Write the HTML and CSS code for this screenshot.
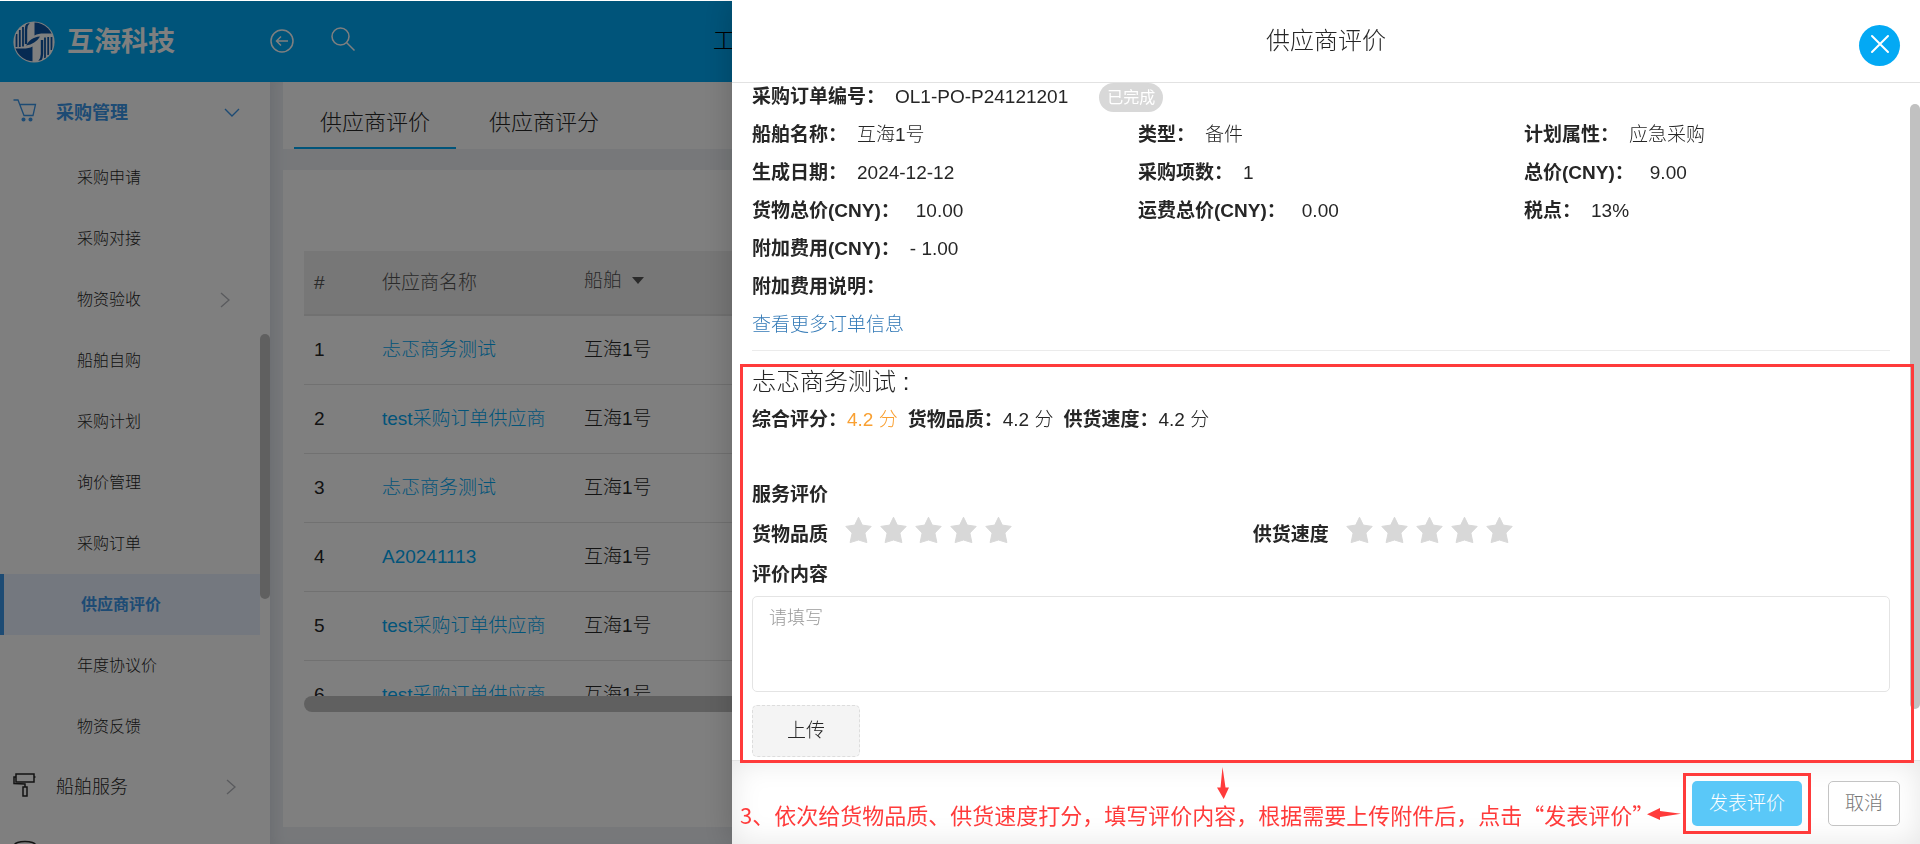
FILE: index.html
```html
<!DOCTYPE html>
<html lang="zh-CN">
<head>
<meta charset="utf-8">
<title>供应商评价</title>
<link rel="stylesheet" href="styles.css">
</head>
<body>
<svg class="sprite" aria-hidden="true">
  <symbol id="star" viewBox="0 0 27 28"><path d="M13.5 1.2 17.3 9.1 26.2 10.4 19.9 17 21.9 26.6 13.5 24 5.1 26.6 7.1 17 .8 10.4 9.7 9.1Z" stroke-linejoin="round" stroke-width="1"/></symbol>
  <symbol id="chev" viewBox="0 0 10 16"><path d="M1 1l8 7-8 7" fill="none" stroke="currentColor" stroke-width="1.4"/></symbol>
</svg>

<div class="app">
  <header class="topbar">
    <a class="brand" href="#">
      <svg class="brand-logo" viewBox="0 0 42 42" aria-hidden="true">
        <clipPath id="disc"><circle cx="21" cy="21" r="19.6"/></clipPath>
        <circle cx="21" cy="21" r="20.6" fill="#fff"/>
        <g clip-path="url(#disc)">
          <path d="M21.500 0H42v12.500H31c-4 0-7 .5-9.500 2z" fill="#0c55a5"/>
          <path d="M19.500 42H0V27.500h10c4 0 7-.5 9.500-2z" fill="#0c55a5"/>
          <path d="M13 24.500c3-5 7-8.500 14-9-3 5-8 8-14 9z" fill="#0c55a5"/>
          <path d="M3.500 13v13M6.800 9v17M10 6v19.500M32 16.500V37M35.200 16v18M38.500 16v13" stroke="#0c55a5" stroke-width="1.800" fill="none"/>
          <path d="M13 23V9c0-4 1-6 3-8M29 19v14c0 4-1 6-3 8" stroke="#0c55a5" stroke-width="2.400" fill="none"/>
        </g>
      </svg>
      <span class="brand-name">互海科技</span>
    </a>
    <button class="icon-btn" type="button" aria-label="返回">
      <svg width="24" height="24" viewBox="0 0 24 24" fill="none" stroke="#fff" stroke-width="1.5"><circle cx="12" cy="12" r="11"/><path d="M18 12H7M11 7.500L6.500 12l4.500 4.500"/></svg>
    </button>
    <button class="icon-btn icon-btn-search" type="button" aria-label="搜索">
      <svg width="24" height="24" viewBox="0 0 24 24" fill="none" stroke="#fff" stroke-width="1.500"><circle cx="9.500" cy="9.500" r="8.500"/><path d="M15.500 15.500l8 8"/></svg>
    </button>
    <span class="topbar-menu">工</span>
  </header>

  <div class="workspace">
    <nav class="sidebar">
      <a class="group group-open" href="#">
        <svg class="group-icon" viewBox="0 0 24 24" fill="none" stroke="currentColor" stroke-width="1.3"><path d="M.5 1H5l6 15.500h9L22.500 5.500H7"/><circle cx="10.500" cy="20.500" r="1.400" fill="currentColor"/><circle cx="17.500" cy="20.500" r="1.400" fill="currentColor"/></svg>
        <span class="group-text">采购管理</span>
        <svg class="group-down" viewBox="0 0 16 10" fill="none" stroke="currentColor" stroke-width="1.400"><path d="M1 1l7 7 7-7"/></svg>
      </a>
      <ul class="submenu">
        <li><a class="item" href="#">采购申请</a></li>
        <li><a class="item" href="#">采购对接</a></li>
        <li><a class="item" href="#">物资验收<svg class="chev"><use href="#chev"/></svg></a></li>
        <li><a class="item" href="#">船舶自购</a></li>
        <li><a class="item" href="#">采购计划</a></li>
        <li><a class="item" href="#">询价管理</a></li>
        <li><a class="item" href="#">采购订单</a></li>
        <li><a class="item item-active" href="#">供应商评价</a></li>
        <li><a class="item" href="#">年度协议价</a></li>
        <li><a class="item" href="#">物资反馈</a></li>
      </ul>
      <a class="group group-closed" href="#">
        <svg class="group-icon" viewBox="0 0 24 24" fill="none" stroke="currentColor" stroke-width="1.500"><path d="M3 1h18v8H3zM21 4h1.500M3 4H1v6.500l11 .5v3M10 14h4v9h-4z"/></svg>
        <span class="group-text">船舶服务</span>
        <svg class="chev"><use href="#chev"/></svg>
      </a>
      <a class="group group-next" href="#" aria-label="更多">
        <svg class="group-icon" viewBox="0 0 24 24" fill="none" stroke="currentColor" stroke-width="1.500"><ellipse cx="12" cy="5" rx="10.500" ry="3.500"/><path d="M1.500 5v16M22.500 5v16"/></svg>
      </a>
      <span class="side-thumb"></span>
    </nav>

    <main class="main">
      <div class="tabs">
        <a class="tab tab-active" href="#">供应商评价</a>
        <a class="tab" href="#">供应商评分</a>
      </div>
      <section class="panel">
        <div class="table-clip">
          <table class="grid">
            <thead>
              <tr><th class="c-no">#</th><th class="c-name">供应商名称</th><th class="c-ship"><span class="sort">船舶<i class="caret"></i></span></th></tr>
            </thead>
            <tbody>
              <tr><td>1</td><td><a href="#">忐忑商务测试</a></td><td>互海1号</td></tr>
              <tr><td>2</td><td><a href="#">test采购订单供应商</a></td><td>互海1号</td></tr>
              <tr><td>3</td><td><a href="#">忐忑商务测试</a></td><td>互海1号</td></tr>
              <tr><td>4</td><td><a href="#">A20241113</a></td><td>互海1号</td></tr>
              <tr><td>5</td><td><a href="#">test采购订单供应商</a></td><td>互海1号</td></tr>
              <tr><td>6</td><td><a href="#">test采购订单供应商</a></td><td>互海1号</td></tr>
            </tbody>
          </table>
        </div>
        <div class="table-thumb"></div>
      </section>
    </main>
  </div>
</div>

<div class="backdrop"></div>

<aside class="drawer" role="dialog" aria-labelledby="drawer-title">
  <header class="drawer-head">
    <h1 class="drawer-title" id="drawer-title">供应商评价</h1>
    <button class="close" type="button" aria-label="关闭">
      <svg width="20" height="20" viewBox="0 0 20 20" stroke="#fff" stroke-width="2" stroke-linecap="round"><path d="M2 2l16 16M18 2L2 18"/></svg>
    </button>
  </header>

  <div class="drawer-body">
    <div class="order-line">
      <b>采购订单编号：</b><span class="value">OL1-PO-P24121201</span><span class="badge">已完成</span>
    </div>
    <div class="facts">
      <div><b>船舶名称：</b><span class="value">互海1号</span></div>
      <div><b>类型：</b><span class="value">备件</span></div>
      <div><b>计划属性：</b><span class="value">应急采购</span></div>
      <div><b>生成日期：</b><span class="value">2024-12-12</span></div>
      <div><b>采购项数：</b><span class="value">1</span></div>
      <div><b>总价(CNY)：</b><span class="value value-sum">9.00</span></div>
      <div><b>货物总价(CNY)：</b><span class="value value-sum">10.00</span></div>
      <div><b>运费总价(CNY)：</b><span class="value value-sum">0.00</span></div>
      <div><b>税点：</b><span class="value">13%</span></div>
      <div class="wide"><b>附加费用(CNY)：</b><span class="value">- 1.00</span></div>
      <div class="wide"><b>附加费用说明：</b></div>
      <div class="wide"><a class="more" href="#">查看更多订单信息</a></div>
    </div>

    <form class="review" id="review">
      <h2 class="supplier">忐忑商务测试 :</h2>
      <p class="scores">
        <span><b>综合评分：</b><span class="score-main">4.2 分</span></span>
        <span><b>货物品质：</b>4.2 分</span>
        <span><b>供货速度：</b>4.2 分</span>
      </p>
      <h3 class="label">服务评价</h3>
      <div class="ratings">
        <div class="rating" role="radiogroup" aria-labelledby="r-quality">
          <b id="r-quality">货物品质</b>
          <span class="stars">
            <label><input type="radio" name="quality" value="1" aria-label="1 星"><svg><use href="#star"/></svg></label>
            <label><input type="radio" name="quality" value="2" aria-label="2 星"><svg><use href="#star"/></svg></label>
            <label><input type="radio" name="quality" value="3" aria-label="3 星"><svg><use href="#star"/></svg></label>
            <label><input type="radio" name="quality" value="4" aria-label="4 星"><svg><use href="#star"/></svg></label>
            <label><input type="radio" name="quality" value="5" aria-label="5 星"><svg><use href="#star"/></svg></label>
          </span>
        </div>
        <div class="rating" role="radiogroup" aria-labelledby="r-speed">
          <b id="r-speed">供货速度</b>
          <span class="stars">
            <label><input type="radio" name="speed" value="1" aria-label="1 星"><svg><use href="#star"/></svg></label>
            <label><input type="radio" name="speed" value="2" aria-label="2 星"><svg><use href="#star"/></svg></label>
            <label><input type="radio" name="speed" value="3" aria-label="3 星"><svg><use href="#star"/></svg></label>
            <label><input type="radio" name="speed" value="4" aria-label="4 星"><svg><use href="#star"/></svg></label>
            <label><input type="radio" name="speed" value="5" aria-label="5 星"><svg><use href="#star"/></svg></label>
          </span>
        </div>
      </div>
      <label class="label" for="comment">评价内容</label>
      <textarea class="comment" id="comment" placeholder="请填写"></textarea>
      <button class="upload" type="button">上传</button>
    </form>
    <span class="drawer-thumb"></span>
  </div>

  <footer class="drawer-foot">
    <span class="submit-wrap"><button class="btn btn-primary" type="submit" form="review">发表评价</button><span class="submit-mark"></span></span>
    <button class="btn btn-plain" type="button">取消</button>
  </footer>

  <div class="form-mark"></div>
  <svg class="arrow-down" viewBox="0 0 14 32" aria-hidden="true"><path d="M6.500 0L9.500 20.500H13L7.700 32 1 20.500H4.500Z" fill="#ff3b3b"/></svg>
  <p class="note">3、依次给货物品质、供货速度打分，填写评价内容，根据需要上传附件后，点击“发表评价”</p>
  <svg class="arrow-left" viewBox="0 0 34 14" aria-hidden="true"><path d="M34 6.800L13 10V13L0 7.300 13 1V4Z" fill="#ff3b3b"/></svg>
</aside>
</body>
</html>
```

FILE: styles.css
```css
* { box-sizing: border-box; }

html, body { height: 100%; }

body {
  margin: 0;
  overflow: hidden;
  background: #fff;
  color: #262626;
  font-family: "Liberation Sans", "Noto Sans CJK SC", sans-serif;
  font-size: 19px;
  font-weight: 300;
  line-height: 26px;
}

a { color: inherit; text-decoration: none; }
button { font: inherit; cursor: pointer; padding: 0; }
b { font-weight: 700; }
.sprite { display: none; }

/* App shell */
.app {
  height: 100vh;
  padding-top: 1px;
  display: flex;
  flex-direction: column;
}

.topbar {
  flex: none;
  height: 81px;
  display: flex;
  align-items: center;
  background: #00a8f4;
}

.brand {
  width: 270px;
  padding-left: 13px;
  display: flex;
  align-items: center;
  gap: 12px;
  color: #fff;
}
.brand-logo { width: 42px; height: 42px; }
.brand-name { font-size: 27px; font-weight: 700; line-height: 36px; }

.icon-btn {
  width: 24px;
  height: 24px;
  margin-bottom: 2px;
  border: 0;
  background: none;
}
.icon-btn svg { display: block; }
.icon-btn-search { margin: 0 0 6px 37px; }
.topbar-menu { margin: 0 0 2px 358px; color: #000; font-size: 22px; }

.workspace { flex: 1; min-height: 0; display: flex; }

/* Sidebar */
.sidebar {
  position: relative;
  flex: none;
  width: 270px;
  padding-right: 10px;
  overflow: hidden;
  background: #fff;
}

.group {
  display: flex;
  align-items: center;
  padding: 0 24px 0 13px;
  font-size: 18px;
}
.group-icon { width: 24px; height: 24px; margin-bottom: 4px; }
.group-text { flex: 1; margin-left: 19px; }
.group-open { height: 65px; padding-right: 20px; padding-bottom: 4px; color: #3a96e8; }
.group-open .group-text { font-weight: 700; }
.group-down { width: 16px; height: 10px; }
.group-closed { height: 60px; }
.group-next { height: 74px; }
.chev { width: 10px; height: 16px; color: #b4b6bc; }

.submenu { margin: 0; padding: 0; list-style: none; }
.item {
  display: flex;
  align-items: center;
  justify-content: space-between;
  height: 61px;
  padding: 0 30px 0 77px;
  font-size: 16px;
}
.item-active {
  border-left: 4px solid #3a96e8;
  background: #e8f1ff;
  color: #3a96e8;
  font-weight: 700;
}

.side-thumb {
  position: absolute;
  top: 252px;
  right: 0;
  width: 10px;
  height: 265px;
  border-radius: 5px;
  background: #c1c1c1;
}

/* Main area */
.main {
  flex: 1;
  min-width: 0;
  display: flex;
  flex-direction: column;
  gap: 21px;
  padding: 0 0 17px 13px;
  background: #eef1f5;
  box-shadow: inset 12px 0 12px -6px rgba(120, 130, 150, .16);
}

.tabs {
  display: flex;
  gap: 7px;
  height: 67px;
  padding-left: 11px;
  background: #fff;
}
.tab {
  padding: 28px 26px 0;
  border-bottom: 2px solid transparent;
  font-size: 22px;
}
.tab-active { border-bottom-color: #00a8f4; }

.panel { flex: 1; min-height: 0; padding: 81px 0 0 21px; background: #fff; }
.table-clip { height: 445px; overflow: hidden; }
.table-thumb { height: 16px; border-radius: 8px; background: #c1c1c1; }

.grid { width: 100%; border-collapse: separate; border-spacing: 0; table-layout: fixed; }
.grid th, .grid td { padding: 0 10px; text-align: left; font-weight: 300; }
.grid th {
  height: 65px;
  background: #eee;
  border-bottom: 2px solid #e2e2e2;
  color: #555;
}
.grid td { height: 69px; border-bottom: 1px solid #e2e2e2; }
.grid td a { color: #03a9f4; }
.c-no { width: 68px; }
.c-name { width: 202px; }
.sort { display: inline-flex; align-items: center; gap: 10px; padding-bottom: 4px; }
.caret {
  border: 6px solid transparent;
  border-top: 7px solid #555;
  border-bottom: 0;
}

.backdrop { position: fixed; inset: 1px 0 0; z-index: 5; background: rgba(0, 0, 0, .5); }

/* Drawer */
.drawer {
  position: fixed;
  inset: 0 0 0 auto;
  z-index: 10;
  width: 61.875%;
  display: flex;
  flex-direction: column;
  background: #fff;
  box-shadow: 0 0 30px rgba(0, 0, 0, .2);
}

.drawer-head {
  position: relative;
  flex: none;
  height: 83px;
  display: flex;
  align-items: center;
  justify-content: center;
  border-bottom: 1px solid #e2e2e2;
}
.drawer-title { margin: 0; font-size: 24px; font-weight: 300; line-height: 36px; }
.close {
  position: absolute;
  top: 25px;
  right: 20px;
  width: 41px;
  height: 41px;
  border: 0;
  border-radius: 50%;
  background: #03a9f4;
}
.close svg { display: block; margin: 0 auto 3px; }

.drawer-body {
  position: relative;
  flex: 1;
  min-height: 0;
  overflow: hidden;
  padding: 0 30px 0 20px;
}

.order-line { display: flex; height: 29px; margin-bottom: 10px; line-height: 28px; }
.value { margin-left: 10px; }
.value-sum { margin-left: 16px; }
.badge {
  margin-left: 31px;
  padding: 0 8px;
  border-radius: 15px;
  background: #d8d8d8;
  color: #fff;
  font-size: 16px;
  font-weight: 400;
  line-height: 29px;
}

.facts {
  display: grid;
  grid-template-columns: repeat(3, 1fr);
  row-gap: 12px;
  margin-right: -20px;
}
.wide { grid-column: 1 / -1; }
.more { color: #337ab7; }

.review {
  margin-top: 12px;
  padding-top: 13px;
  border-top: 1px solid #ebebeb;
}
.supplier { margin: 0; font-size: 24px; font-weight: 300; line-height: 36px; }
.scores { display: flex; gap: 10px; margin: 7px 0 49px; }
.score-main { color: #f9a032; }
.label { display: block; margin: 0; font-size: 19px; font-weight: 700; }

.ratings { display: grid; grid-template-columns: 44% 1fr; margin: 8px 0 14px; }
.rating { display: flex; align-items: flex-end; gap: 17px; height: 32px; }
.stars { display: flex; gap: 8px; margin-bottom: 4px; }
.stars label { position: relative; width: 27px; height: 28px; cursor: pointer; }
.stars input { position: absolute; inset: 0; margin: 0; width: 27px; height: 28px; opacity: 0; }
.stars svg { display: block; width: 27px; height: 28px; fill: #d8d8d8; stroke: #d8d8d8; }

.comment {
  display: block;
  width: 100%;
  height: 96px;
  margin: 8px 0 13px;
  padding: 8px 16px;
  border: 1px solid #e4e4e4;
  border-radius: 5px;
  resize: none;
  font: inherit;
  font-size: 18px;
}
.comment::placeholder { color: #999; opacity: 1; }

.upload {
  width: 108px;
  height: 52px;
  border: 1px dashed #ddd;
  border-radius: 5px;
  background: #f4f4f4;
  color: #262626;
}

.drawer-thumb {
  position: absolute;
  top: 21px;
  right: 0;
  width: 10px;
  height: 605px;
  border-radius: 5px;
  background: #c1c1c1;
}

.drawer-foot {
  flex: none;
  height: 84px;
  display: flex;
  align-items: center;
  justify-content: flex-end;
  gap: 26px;
  padding: 2px 20px 0 0;
  border-top: 1px solid #e2e2e2;
  box-shadow: inset 0 0 30px rgba(0, 0, 0, .1);
}
.btn { height: 45px; border-radius: 5px; }
.btn-primary { width: 110px; border: 0; background: #5ac8f8; color: #fff; }
.btn-plain { width: 72px; border: 1px solid #c4c4c4; background: #fff; color: #777; }

/* Guide marks laid over the drawer */
.submit-wrap { position: relative; }
.submit-mark { position: absolute; inset: -8px -9px; border: 3px solid #ff3b3b; pointer-events: none; }
.form-mark {
  position: absolute;
  inset: 364px 6px 81px 8px;
  border: 3px solid #ff3b3b;
  pointer-events: none;
}
.note {
  position: absolute;
  left: 8px;
  bottom: 14px;
  margin: 0;
  color: #ff3b3b;
  font-family: "Noto Sans CJK SC", sans-serif;
  font-size: 22px;
  font-weight: 400;
  line-height: 32px;
  white-space: nowrap;
}
.arrow-down { position: absolute; left: 484px; bottom: 45px; width: 14px; height: 32px; }
.arrow-left { position: absolute; right: 239px; bottom: 23px; width: 34px; height: 14px; }
```
